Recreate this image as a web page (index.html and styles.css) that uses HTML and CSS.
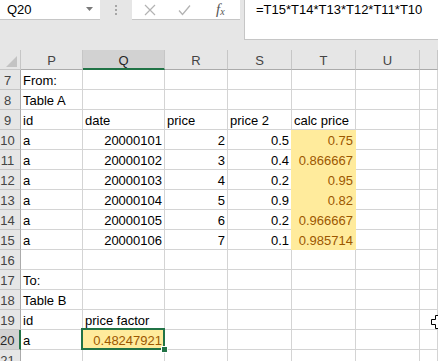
FILE: index.html
```html
<!DOCTYPE html>
<html lang="en">
<head>
    <meta charset="UTF-8">
    <title>Sheet</title>
    <link rel="stylesheet" href="styles.css">
</head>
<body>
    <div class="formula-row">
        <div class="name-box">
            <span>Q20</span>
            <svg class="caret" width="7" height="4" viewBox="0 0 7 4"><path d="M0 0h7L3.5 4z" fill="#7a7a7a"/></svg>
        </div>
        <div class="grip"><i></i><i></i><i></i></div>
        <div class="fx-buttons">
            <svg width="12" height="12" viewBox="0 0 12 12"><path d="M1 1l10 10M11 1L1 11" stroke="#b3b3b3" stroke-width="1.2" fill="none"/></svg>
            <svg width="13" height="12" viewBox="0 0 13 12"><path d="M1 6.5l3.5 4L12 1.5" stroke="#b3b3b3" stroke-width="1.3" fill="none"/></svg>
            <span class="fx">f<sub>x</sub></span>
        </div>
        <div class="formula-input">=T15*T14*T13*T12*T11*T10</div>
    </div>

    <div class="sheet">
        <div class="hd corner"><svg width="11" height="11" viewBox="0 0 11 11"><path d="M11 0v11H0z" fill="#c3c3c3"/></svg></div>
        <div class="hd col">P</div><div class="hd col active">Q</div><div class="hd col">R</div><div class="hd col">S</div><div class="hd col">T</div><div class="hd col">U</div><div class="hd col"></div>

        <div class="hd row">7</div><div class="c">From:</div><div class="c"></div><div class="c"></div><div class="c"></div><div class="c"></div><div class="c"></div><div class="c"></div>
        <div class="hd row">8</div><div class="c">Table A</div><div class="c"></div><div class="c"></div><div class="c"></div><div class="c"></div><div class="c"></div><div class="c"></div>
        <div class="hd row">9</div><div class="c">id</div><div class="c">date</div><div class="c">price</div><div class="c">price 2</div><div class="c">calc price</div><div class="c"></div><div class="c"></div>
        <div class="hd row">10</div><div class="c">a</div><div class="c num">20000101</div><div class="c num">2</div><div class="c num">0.5</div><div class="c num neutral">0.75</div><div class="c"></div><div class="c"></div>
        <div class="hd row">11</div><div class="c">a</div><div class="c num">20000102</div><div class="c num">3</div><div class="c num">0.4</div><div class="c num neutral">0.866667</div><div class="c"></div><div class="c"></div>
        <div class="hd row">12</div><div class="c">a</div><div class="c num">20000103</div><div class="c num">4</div><div class="c num">0.2</div><div class="c num neutral">0.95</div><div class="c"></div><div class="c"></div>
        <div class="hd row">13</div><div class="c">a</div><div class="c num">20000104</div><div class="c num">5</div><div class="c num">0.9</div><div class="c num neutral">0.82</div><div class="c"></div><div class="c"></div>
        <div class="hd row">14</div><div class="c">a</div><div class="c num">20000105</div><div class="c num">6</div><div class="c num">0.2</div><div class="c num neutral">0.966667</div><div class="c"></div><div class="c"></div>
        <div class="hd row">15</div><div class="c">a</div><div class="c num">20000106</div><div class="c num">7</div><div class="c num">0.1</div><div class="c num neutral">0.985714</div><div class="c"></div><div class="c"></div>
        <div class="hd row">16</div><div class="c"></div><div class="c"></div><div class="c"></div><div class="c"></div><div class="c"></div><div class="c"></div><div class="c"></div>
        <div class="hd row">17</div><div class="c">To:</div><div class="c"></div><div class="c"></div><div class="c"></div><div class="c"></div><div class="c"></div><div class="c"></div>
        <div class="hd row">18</div><div class="c">Table B</div><div class="c"></div><div class="c"></div><div class="c"></div><div class="c"></div><div class="c"></div><div class="c"></div>
        <div class="hd row">19</div><div class="c">id</div><div class="c">price factor</div><div class="c"></div><div class="c"></div><div class="c"></div><div class="c"></div><div class="c cursor-cell"><svg class="cursor" width="14" height="14" viewBox="0 0 14 14"><path d="M4.5.5h5v4h4v5h-4v4h-5v-4h-4v-5h4z" fill="#fff" stroke="#000"/></svg></div>
        <div class="hd row active">20</div><div class="c">a</div><div class="c num neutral selected">0.48247921</div><div class="c"></div><div class="c"></div><div class="c"></div><div class="c"></div><div class="c"></div>
        <div class="hd row">21</div><div class="c"></div><div class="c"></div><div class="c"></div><div class="c"></div><div class="c"></div><div class="c"></div><div class="c"></div>
    </div>
</body>
</html>
```

FILE: styles.css
```css
body {
    margin: 0;
    width: 438px;
    height: 361px;
    overflow: hidden;
    background: #e6e6e6;
    font-family: "Liberation Sans", Arial, sans-serif;
    font-size: 13px;
    color: #000;
}
.formula-row {
    display: flex;
    align-items: flex-start;
    height: 40px;
    margin-bottom: 10px;
}
.name-box {
    width: 100px;
    height: 20px;
    box-sizing: border-box;
    background: #fff;
    border-bottom: 1px solid #c6c6c6;
    display: flex;
    align-items: center;
    justify-content: space-between;
    padding: 0 7px 0 7px;
}
.caret { margin-top: -2px; }
.grip {
    width: 32px;
    height: 20px;
    display: flex;
    flex-direction: column;
    align-items: center;
    justify-content: center;
    gap: 2px;
}
.grip i {
    width: 2px;
    height: 2px;
    background: #a6a6a6;
}
.fx-buttons {
    width: 108px;
    height: 20px;
    box-sizing: border-box;
    background: #fff;
    border-bottom: 1px solid #c6c6c6;
    display: flex;
    align-items: center;
    gap: 22px;
    padding-left: 12px;
}
.fx {
    font-family: "Liberation Serif", serif;
    font-style: italic;
    font-size: 15px;
    color: #555;
    margin-left: 3px;
}
.fx sub { font-size: 10px; vertical-align: -1px; }
.formula-input {
    flex: 1;
    height: 40px;
    margin-left: 4px;
    box-sizing: border-box;
    background: #fff;
    border-left: 1px solid #c6c6c6;
    border-bottom: 1px solid #c6c6c6;
    padding: 2px 0 0 11px;
}
.sheet {
    display: grid;
    grid-template-columns: 21px 62px 82px 63px 64px 64px 64px 18px;
    grid-auto-rows: 20px;
    background: #fff;
}
.sheet > div {
    box-sizing: border-box;
    border-right: 1px solid #d4d4d4;
    border-bottom: 1px solid #d4d4d4;
    line-height: 19px;
    padding-top: 1px;
    white-space: nowrap;
    overflow: visible;
}
.c { padding-left: 2px; padding-right: 2px; }
.num { text-align: right; }
.neutral {
    background: #ffeb9c;
    color: #9c5700;
    border-color: #ffeb9c !important;
    box-shadow: -1px 0 0 #ffeb9c;
}
.hd {
    background: #e6e6e6;
    color: #444;
}
.sheet > .hd { border-color: #c6c6c6; }
.hd.col { text-align: center; border-bottom-color: #ababab; }
.hd.row { padding-right: 5px; text-align: center; border-right-color: #ababab; }
.hd.active { background: #d2d2d2; color: #262626; }
.hd.col.active { border-bottom: 2px solid #217346; }
.hd.row.active { border-right: 2px solid #217346; }
.corner {
    display: flex;
    align-items: flex-end;
    justify-content: flex-end;
    padding: 0 3px 2px 0;
}
.sheet > .corner { padding-top: 0; }
.corner svg { display: block; }
.selected { position: relative; }
.selected::after {
    content: "";
    position: absolute;
    left: -2px;
    top: -2px;
    right: -1px;
    bottom: -1px;
    border: 2px solid #217346;
}
.selected::before {
    content: "";
    position: absolute;
    right: -4px;
    bottom: -4px;
    width: 5px;
    height: 5px;
    background: #217346;
    border: 1px solid #fff;
    z-index: 1;
}
.cursor-cell { position: relative; }
.cursor {
    position: absolute;
    left: 11px;
    top: 5px;
}
```
